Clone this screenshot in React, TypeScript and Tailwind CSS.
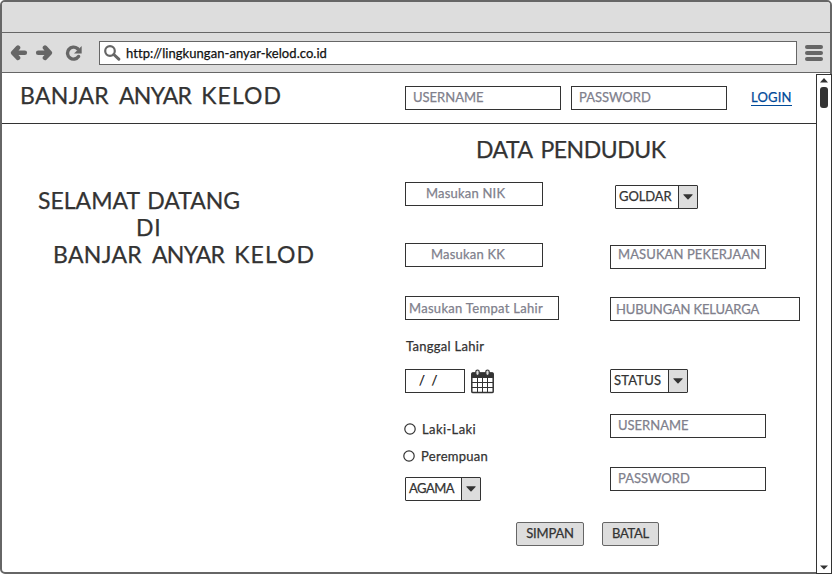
import type { ReactNode } from "react";

function Field({ className, children }: { className: string; children?: ReactNode }) {
  return (
    <div className={`h-6 shrink-0 border border-[#333] bg-white whitespace-pre text-[#80808c] ${className}`}>
      {children}
    </div>
  );
}

function Select({ className, children }: { className: string; children: ReactNode }) {
  return (
    <div className={`flex h-6 shrink-0 rounded-[1px] border border-[#333] bg-white leading-5 ${className}`}>
      <span className="flex-1 pl-[3px] whitespace-nowrap">{children}</span>
      <span className="flex w-[19px] items-center justify-center border-l border-[#333] bg-[#ddd]">
        <svg width="10" height="6" viewBox="0 0 10 6">
          <path d="M0.7 0.3h8.6q.7 0 .2.6L5.5 5.3q-.5.5-1 0L.5.9Q0 .3.7.3z" fill="#333" />
        </svg>
      </span>
    </div>
  );
}

function Radio({ className, children }: { className: string; children: ReactNode }) {
  return (
    <div className={`flex h-4 items-center ${className}`}>
      <svg width="12" height="12" viewBox="0 0 12 12" className="shrink-0">
        <circle cx="6" cy="6" r="5.200" fill="#fff" stroke="#333" strokeWidth="1.200" />
      </svg>
      <span className="leading-4 whitespace-nowrap">{children}</span>
    </div>
  );
}

function Calendar() {
  return (
    <svg width="23" height="25" viewBox="0 0 23 25" className="ml-[6px] shrink-0">
      <rect x="0.8" y="4" width="21.4" height="19.6" rx="1.2" fill="#fff" stroke="#333" strokeWidth="1.5" />
      <path d="M0.5 4.5q0-1 1-1h20q1 0 1 1V9H.5z" fill="#333" />
      <path d="M1 13.5h21M1 18.5h21M6.5 9v14.500M11.500 9v14.500M16.500 9v14.500" stroke="#333" strokeWidth="1" />
      <rect x="4.800" y="1" width="3.400" height="5.500" rx="1.700" fill="#ddd" stroke="#333" strokeWidth="1.200" />
      <rect x="14.800" y="1" width="3.400" height="5.500" rx="1.700" fill="#ddd" stroke="#333" strokeWidth="1.200" />
    </svg>
  );
}

function VillageName() {
  return (
    <>
      <span className="tracking-[0.3px]">BANJAR</span>{" "}
      <span className="tracking-[-0.7px]">ANYAR</span>{" "}
      <span className="tracking-[1.1px]">KELOD</span>
    </>
  );
}

export default function App() {
  return (
    <div className="flex h-[574px] w-[832px] flex-col rounded-[5px] border-2 border-[#666] bg-white font-[Lato,sans-serif] text-[13px] text-[#333] [-webkit-text-stroke-width:0.25px]">
      <div className="h-[31px] shrink-0 rounded-t-[3px] border-b border-[#666] bg-[#ddd]" />
      <div className="flex h-10 shrink-0 items-center border-b border-[#666] bg-[#ddd] pl-2">
        <svg width="18" height="16" viewBox="0 0 18 16" className="shrink-0">
          <path d="M8 2.700L3.200 7.800 8 12.900M3.500 7.800h11.300" fill="none" stroke="#666" strokeWidth="4.600" strokeLinecap="round" strokeLinejoin="round" />
        </svg>
        <svg width="18" height="16" viewBox="0 0 18 16" className="ml-[7px] shrink-0">
          <path d="M10 2.700L14.800 7.800 10 12.900M14.500 7.800H3.200" fill="none" stroke="#666" strokeWidth="4.600" strokeLinecap="round" strokeLinejoin="round" />
        </svg>
        <svg width="18" height="16" viewBox="0 0 18 16" className="ml-3 shrink-0">
          <path d="M13.500 11.500A6 6 0 1 1 12.500 3.600" fill="none" stroke="#666" strokeWidth="3.400" strokeLinecap="round" />
          <path d="M16.700 1v7.500H9z" fill="#666" />
        </svg>
        <div className="ml-4 flex h-6 w-[698px] shrink-0 items-center border border-[#666] bg-white pl-1">
          <svg width="17" height="16" viewBox="0 0 17 16">
            <circle cx="6" cy="6" r="4.800" fill="none" stroke="#666" strokeWidth="2.200" />
            <path d="M9.800 9.500l5 4.700" stroke="#666" strokeWidth="3" strokeLinecap="round" />
          </svg>
          <span className="mt-0.5 ml-[5px] tracking-[0.05px] text-[#111]">http://lingkungan-anyar-kelod.co.id</span>
        </div>
        <div className="mt-px ml-2 flex w-[18px] flex-col gap-[2px]">
          <span className="h-1 rounded-full bg-[#666]" />
          <span className="h-1 rounded-full bg-[#666]" />
          <span className="h-1 rounded-full bg-[#666]" />
        </div>
      </div>

      <div className="flex min-h-0 flex-1">
        <div className="flex w-[814px] shrink-0 flex-col">
          <header className="flex h-[51px] shrink-0 items-start border-b border-[#333] pt-[13px] pl-[18px]">
            <h1 className="-mt-[5px] w-[385px] text-[23px] leading-7 [word-spacing:4px]"><VillageName /></h1>
            <Field className="w-[156px] pl-[7px] leading-5">USERNAME</Field>
            <Field className="ml-2.5 w-[156px] pl-[7px] leading-5">PASSWORD</Field>
            <a className="mt-[3px] ml-6 border-b border-[#004a99] leading-4 tracking-[0.2px] text-[#004a99]">LOGIN</a>
          </header>

          <div className="flex flex-1">
            <section className="w-[403px] pt-[63px] pl-[36px] text-[23px] leading-[27px] whitespace-nowrap">
              <p className="[word-spacing:2px]">SELAMAT DATANG</p>
              <p className="pl-[98px] tracking-[0.8px]">DI</p>
              <p className="pl-[15px] [word-spacing:4px]"><VillageName /></p>
            </section>

            <section className="flex-1 pt-[11px]">
              <h2 className="pl-[71px] text-[23px] leading-7 tracking-[-0.45px] [word-spacing:3px]">DATA PENDUDUK</h2>
              <div className="mt-[19px] flex h-[340px]">
                <div className="w-[205px]">
                  <Field className="w-[138px] pl-[20px] leading-5 tracking-[0.2px]">Masukan NIK</Field>
                  <Field className="mt-[37px] w-[138px] pl-[25px] leading-5 tracking-[0.2px]">Masukan KK</Field>
                  <Field className="mt-[29px] w-[154px] pl-[3px] leading-[22px] tracking-[0.3px]">Masukan Tempat Lahir</Field>
                  <div className="mt-[18px] h-4 pl-px leading-4 tracking-[0.28px]">Tanggal Lahir</div>
                  <div className="mt-[15px] flex">
                    <Field className="w-[60px] pl-[13px] leading-5"><span className="text-[#111]">/  /</span></Field>
                    <Calendar />
                  </div>
                  <Radio className="mt-[27px] -ml-px gap-1.5 tracking-[0.38px]">Laki-Laki</Radio>
                  <Radio className="mt-[11px] -ml-0.5 gap-1.5 tracking-[0.28px]">Perempuan</Radio>
                  <Select className="mt-[13px] w-[76px] tracking-[-0.5px]">AGAMA</Select>
                </div>
                <div className="pt-[3px]">
                  <Select className="ml-[5px] w-[83px] tracking-[-0.1px]">GOLDAR</Select>
                  <Field className="mt-9 w-[156px] pl-[7px] leading-[17px] tracking-[0.1px]">MASUKAN PEKERJAAN</Field>
                  <Field className="mt-7 w-[190px] pl-[5px] leading-[22px] tracking-[-0.15px]">HUBUNGAN KELUARGA</Field>
                  <Select className="mt-12 w-[78px] tracking-[0.2px]">STATUS</Select>
                  <Field className="mt-[21px] w-[156px] pl-[7px] leading-5">USERNAME</Field>
                  <Field className="mt-[29px] w-[156px] pl-[7px] leading-5">PASSWORD</Field>
                </div>
              </div>
              <div className="flex gap-[18px] pl-[111px] leading-5">
                <button className="h-6 w-[68px] rounded-[2px] border border-[#666] bg-[#ddd] pb-0.5 tracking-[-0.2px]">SIMPAN</button>
                <button className="h-6 w-[57px] rounded-[2px] border border-[#666] bg-[#ddd] pb-0.5 tracking-[-0.3px]">BATAL</button>
              </div>
            </section>
          </div>
        </div>

        <div className="mt-px -mb-0.5 flex w-4 shrink-0 flex-col items-center border border-[#333] bg-white pt-[3px] pb-[3px]">
          <svg width="8" height="5" viewBox="0 0 8 5"><path d="M4 0L8 4.500H0z" fill="#333" /></svg>
          <span className="mt-1 h-[21px] w-2 rounded-[3px] bg-[#333]" />
          <svg width="8" height="5" viewBox="0 0 8 5" className="mt-auto"><path d="M4 4.500L8 0.500H0z" fill="#333" /></svg>
        </div>
      </div>
    </div>
  );
}
